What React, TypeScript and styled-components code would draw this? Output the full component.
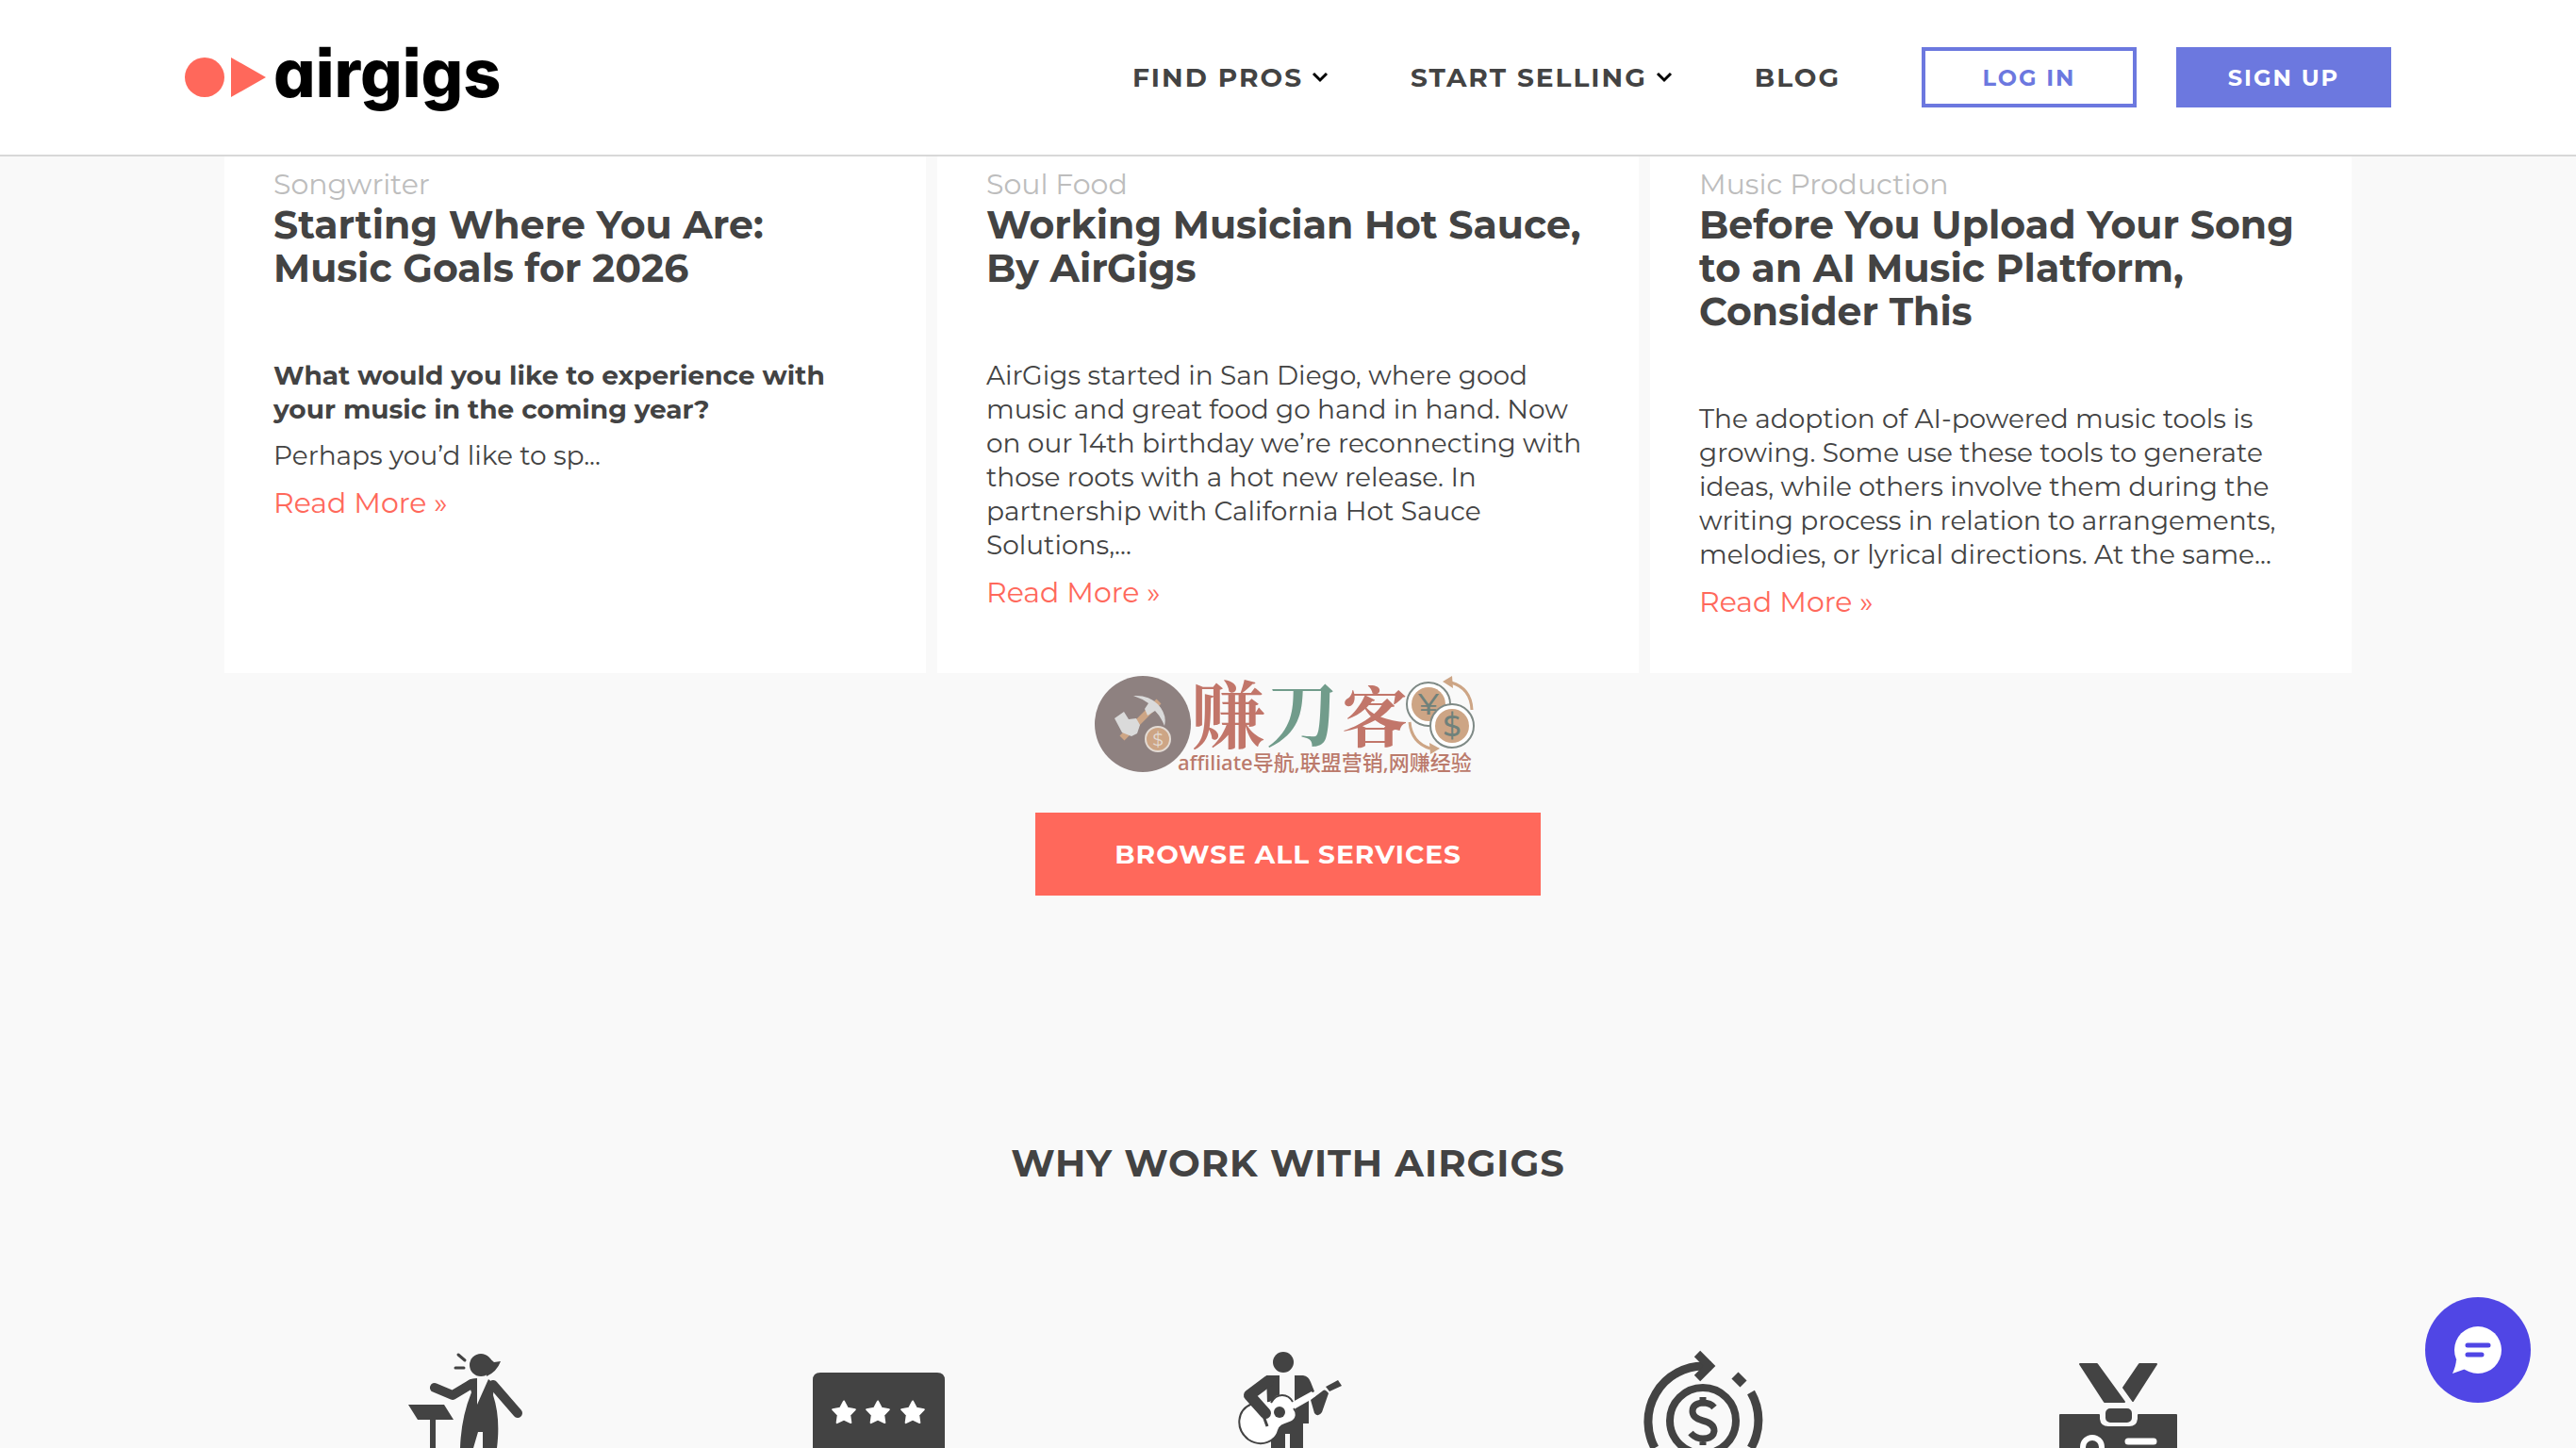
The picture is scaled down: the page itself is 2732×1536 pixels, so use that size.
import React from "react";
import styled, { createGlobalStyle } from "styled-components";

const ink = "#434343";
const coral = "#ff685b";
const indigo = "#6c78df";
const paper = "#f9f9f9";

const GlobalStyle = createGlobalStyle`
  * { box-sizing: border-box; }
  body {
    margin: 0;
    background: ${paper};
    color: ${ink};
    font-family: Montserrat, Inter, "Noto Sans CJK SC", sans-serif;
  }
  h2, h3, p { margin: 0; }
  a { color: inherit; text-decoration: none; }
  button { font: inherit; cursor: pointer; }
`;

const Header = styled.header`
  display: flex;
  align-items: center;
  justify-content: space-between;
  height: 166px;
  padding: 0 196px;
  background: #fff;
  border-bottom: 2px solid #d8d8d8;
`;

const Logo = styled.a`
  display: flex;
  align-items: center;
  gap: 8px;
`;

const LogoMark = styled.svg`
  width: 86px;
  height: 44px;
`;

const LogoName = styled.span`
  color: #000;
  font-family: Inter, "Open Sans", sans-serif;
  font-size: 70px;
  font-weight: 800;
  line-height: 80px;
  padding-bottom: 8px;
  font-feature-settings: "cv11", "ss07";
`;

const Nav = styled.nav`
  display: flex;
  align-items: center;
`;

const NavItem = styled.a`
  display: flex;
  align-items: center;
  gap: 9px;
  margin-right: 86px;
  font-size: 28px;
  font-weight: 700;
  line-height: 36px;
  letter-spacing: 2px;

  svg {
    width: 18px;
    height: 14px;
    margin-right: 1px;
  }
`;

const Actions = styled.div`
  display: flex;
  gap: 42px;
`;

const HeaderButton = styled.button<{ $filled?: boolean }>`
  width: 228px;
  height: 64px;
  padding: 0;
  border: 4px solid ${indigo};
  background: ${(p) => (p.$filled ? indigo : "#fff")};
  color: ${(p) => (p.$filled ? "#fff" : indigo)};
  font-size: 24px;
  font-weight: 700;
  letter-spacing: 2px;
`;

const Cards = styled.section`
  display: grid;
  grid-template-columns: repeat(3, 1fr);
  gap: 12px;
  padding: 0 238px;
`;

const Card = styled.article`
  min-height: 548px;
  padding: 11px 48px 36px 52px;
  background: #fff;
`;

const Category = styled.p`
  color: #bdbdbd;
  font-size: 30px;
  font-weight: 400;
  line-height: 38px;
`;

const CardTitle = styled.h3`
  margin-bottom: 73px;
  font-size: 41px;
  font-weight: 700;
  line-height: 46px;
  white-space: pre-line;
`;

const Text = styled.p<{ $strong?: boolean }>`
  margin-bottom: 13px;
  font-size: 28px;
  font-weight: ${(p) => (p.$strong ? 700 : 400)};
  line-height: 36px;
  white-space: pre-line;
`;

const ReadMore = styled.a`
  display: block;
  color: ${coral};
  font-size: 30px;
  line-height: 40px;
`;

const Centered = styled.section`
  display: flex;
  flex-direction: column;
  align-items: center;
`;

const Badge = styled.svg`
  width: 412px;
  height: 110px;
  margin-bottom: 38px;
  overflow: visible;
`;

const BrowseButton = styled.button`
  width: 536px;
  height: 88px;
  border: 0;
  background: ${coral};
  color: #fff;
  font-size: 28px;
  font-weight: 700;
  letter-spacing: 1px;
`;

const SectionTitle = styled.h2`
  margin: 259px 0 165px;
  font-size: 40px;
  font-weight: 700;
  line-height: 50px;
  letter-spacing: 1px;
`;

const Reasons = styled.ul`
  display: grid;
  grid-template-columns: repeat(5, 1fr);
  margin: 0;
  padding: 0 270px;
  list-style: none;
`;

const Reason = styled.li`
  display: flex;
  justify-content: center;
`;

const ReasonIcon = styled.svg`
  width: 160px;
  height: 112px;
`;

const ChatButton = styled.button`
  position: fixed;
  right: 48px;
  bottom: 48px;
  width: 112px;
  height: 112px;
  padding: 0;
  border: 0;
  border-radius: 50%;
  background: #5046e5;

  svg {
    display: block;
    width: 112px;
    height: 112px;
  }
`;

const Chevron = () => (
  <svg viewBox="0 0 18 14" aria-hidden="true">
    <path d="M2 3l7 7 7-7" fill="none" stroke="#000" strokeWidth="3" />
  </svg>
);

const posts = [
  {
    category: "Songwriter",
    title: "Starting Where You Are:\nMusic Goals for 2026",
    lead: "What would you like to experience with\nyour music in the coming year?",
    text: "Perhaps you’d like to sp...",
  },
  {
    category: "Soul Food",
    title: "Working Musician Hot Sauce,\nBy AirGigs",
    text: "AirGigs started in San Diego, where good\nmusic and great food go hand in hand. Now\non our 14th birthday we’re reconnecting with\nthose roots with a hot new release. In\npartnership with California Hot Sauce\nSolutions,...",
  },
  {
    category: "Music Production",
    title: "Before You Upload Your Song\nto an AI Music Platform,\nConsider This",
    text: "The adoption of AI-powered music tools is\ngrowing. Some use these tools to generate\nideas, while others involve them during the\nwriting process in relation to arrangements,\nmelodies, or lyrical directions. At the same...",
  },
];

const AffiliateBadge = () => (
  <Badge viewBox="0 0 412 110" role="img" aria-label="赚刀客">
    <circle cx="52" cy="54" r="51" fill="#8e8180" />
    <path d="M30 69L69 30" stroke="#cda585" strokeWidth="7" />
    <path d="M42 24Q58 23 68 33Q78 44 75 56Q71 46 65 40L57 45L54 38L58 32Q51 27 42 24Z" fill="#dadada" />
    <path d="M22 48L32 41L37 49L45 48L49 55L46 64L40 67L30 63Z" fill="#dadada" />
    <circle cx="68" cy="70" r="13" fill="#cda585" stroke="#e3dbd4" strokeWidth="2" />
    <text x="68" y="77" textAnchor="middle" fontSize="19" fill="#e3dbd4">$</text>
    <g fontFamily='"Noto Serif CJK SC", "Noto Sans CJK SC", sans-serif' fontWeight="700">
      <text x="104" y="74" fontSize="78" fill="#c2766a">赚</text>
      <text x="183" y="72" fontSize="76" fill="#719c8b">刀</text>
      <text x="263" y="73" fontSize="70" fill="#c2766a">客</text>
    </g>
    <text x="89" y="103" fontFamily='"Noto Sans", "Noto Sans CJK SC", sans-serif' fontSize="22" fontWeight="500" fill="#bb7a6b">
      affiliate导航,联盟营销,网赚经验
    </text>
    <g stroke="#7f8a86" strokeWidth="2" fill="#fff">
      <circle cx="355" cy="33" r="23" />
      <circle cx="355" cy="33" r="18" fill="#cda585" stroke="none" />
    </g>
    <text x="355" y="44" textAnchor="middle" fontSize="31" fontWeight="500" fill="#6f817b">¥</text>
    <g stroke="#7f8a86" strokeWidth="2" fill="#fff">
      <circle cx="380" cy="56" r="23" />
      <circle cx="380" cy="56" r="18" fill="#cda585" stroke="none" />
    </g>
    <text x="380" y="67" textAnchor="middle" fontSize="31" fontWeight="500" fill="#6f817b">$</text>
    <g fill="none" stroke="#cda585" strokeWidth="3">
      <path d="M401 39Q400 16 379 10" />
      <path d="M335 52Q337 74 357 80" />
    </g>
    <path d="M370 9L380 3L381 16ZM367 80L356 74L357 86Z" fill="#cda585" />
  </Badge>
);

const Conductor = () => (
  <ReasonIcon viewBox="0 0 160 112" role="img" aria-label="Performer at a stand">
    <g fill={ink}>
      <path d="M24 66H62L72 82H34ZM47 82H53V112H47Z" />
      <circle cx="101" cy="24" r="12" />
      <path d="M107 14L115 21L122 20Q118 31 107 36Z" />
      <path d="M87 41Q90 38 97 38V66L109 39L115 44L114 56Q122 80 118 112H103V95H98L93 112H79Q80 80 91 53Z" />
    </g>
    <g fill="none" stroke={ink} strokeLinecap="round" strokeLinejoin="round">
      <path d="M52 48L71 56L91 44M114 45L140 75" strokeWidth="10" />
      <path d="M77 13L84 19M74 27H83" strokeWidth="3" />
    </g>
  </ReasonIcon>
);

const star = (cx: number) =>
  Array.from({ length: 10 }, (_, i) => {
    const r = i % 2 ? 6.5 : 12.5;
    const a = -Math.PI / 2 + (i * Math.PI) / 5;
    return `${cx + r * Math.cos(a)},${75 + r * Math.sin(a)}`;
  }).join(" ");

const Rating = () => (
  <ReasonIcon viewBox="0 0 160 112" role="img" aria-label="Three star review">
    <path d="M14 112V40Q14 32 22 32H146Q154 32 154 40V112Z" fill={ink} />
    {[47, 83, 120].map((cx) => (
      <polygon key={cx} points={star(cx)} fill="#fff" stroke="#fff" strokeWidth="2" strokeLinejoin="round" />
    ))}
  </ReasonIcon>
);

const Guitarist = () => (
  <ReasonIcon viewBox="0 0 160 112" role="img" aria-label="Guitar player">
    <g fill={ink}>
      <circle cx="75" cy="21" r="11" />
      <path d="M57 35H71V58L58 64Z" />
      <path d="M87 35H96Q102 36 104 42L108 52L87 64Z" />
      <path d="M88 70L102 62V86H96V112H82V97H77V112H62V90Z" />
      <path d="M104 61L116 52Q119 48 123 54L116 74Q112 80 108 75Z" />
      <path d="M120 47L133 40L137 46L124 52Z" />
    </g>
    <path
      d="M44 64C25 72 24 92 38 103C52 112 67 105 70 93C72 87 77 87 82 85C90 82 90 75 87 70L109 57L105 52L85 63C80 54 68 53 64 61C60 66 52 61 44 64Z"
      fill="#fff"
    />
    <path
      d="M42 65C25 72 24 92 38 103C52 112 67 105 70 93C72 87 77 87 82 85C90 82 90 75 86 70M85 63C80 54 68 53 62 64"
      fill="none"
      stroke={ink}
      strokeWidth="2"
    />
    <circle cx="71" cy="74" r="6" fill={ink} />
    <path d="M59 41L39 56L56 75" fill="none" stroke={ink} strokeWidth="12" strokeLinejoin="round" strokeLinecap="round" />
    <path d="M54 78L58 89" stroke={ink} strokeWidth="3" />
  </ReasonIcon>
);

const MoneyBack = () => (
  <ReasonIcon viewBox="0 0 160 112" role="img" aria-label="Money back">
    <g fill="none" stroke={ink} strokeWidth="8">
      <circle cx="82" cy="83" r="35" />
      <path d="M31 112A59 59 0 0 1 82 25H91M133 53A59 59 0 0 1 133 112" strokeWidth="9" />
      <path d="M76 12L89 25L76 38" strokeWidth="9" />
      <path d="M116 35L125 44" strokeWidth="10" />
    </g>
    <path
      d="M94 69Q90 64 82 64Q71 65 71 73Q71 80 82 83Q94 86 94 94Q93 102 82 102Q74 102 69 96M82 58V66M82 101V109"
      fill="none"
      stroke={ink}
      strokeWidth="7"
    />
  </ReasonIcon>
);

const Pass = () => (
  <ReasonIcon viewBox="0 0 160 112" role="img" aria-label="Backstage pass">
    <g fill={ink} stroke={ink} strokeWidth="2" strokeLinejoin="round">
      <path d="M43 23H61L90 63H69Z" />
      <path d="M106 23H124L99 62L89 48Z" />
      <rect x="71" y="71" width="26" height="13" rx="4" />
      <path d="M22 112V77H63V81Q64 90 73 90H95Q104 90 105 81V77H145V112Z" />
    </g>
    <circle cx="56" cy="111" r="10" fill="none" stroke="#fff" strokeWidth="6" />
    <path d="M94 105H121" stroke="#fff" strokeWidth="7" strokeLinecap="round" />
  </ReasonIcon>
);

export default function App() {
  return (
    <>
      <GlobalStyle />
      <Header>
        <Logo href="#" aria-label="airgigs">
          <LogoMark viewBox="0 0 86 44" aria-hidden="true">
            <circle cx="21" cy="22" r="21" fill={coral} />
            <path d="M49 1L86 22L49 43Z" fill={coral} />
          </LogoMark>
          <LogoName>airgigs</LogoName>
        </Logo>
        <Nav>
          <NavItem href="#">FIND PROS <Chevron /></NavItem>
          <NavItem href="#">START SELLING <Chevron /></NavItem>
          <NavItem href="#">BLOG</NavItem>
          <Actions>
            <HeaderButton>LOG IN</HeaderButton>
            <HeaderButton $filled>SIGN UP</HeaderButton>
          </Actions>
        </Nav>
      </Header>
      <main>
        <Cards>
          {posts.map((post) => (
            <Card key={post.category}>
              <Category>{post.category}</Category>
              <CardTitle>{post.title}</CardTitle>
              {post.lead && <Text $strong>{post.lead}</Text>}
              <Text>{post.text}</Text>
              <ReadMore href="#">Read More »</ReadMore>
            </Card>
          ))}
        </Cards>
        <Centered>
          <AffiliateBadge />
          <BrowseButton>BROWSE ALL SERVICES</BrowseButton>
          <SectionTitle>WHY WORK WITH AIRGIGS</SectionTitle>
        </Centered>
        <Reasons>
          <Reason><Conductor /></Reason>
          <Reason><Rating /></Reason>
          <Reason><Guitarist /></Reason>
          <Reason><MoneyBack /></Reason>
          <Reason><Pass /></Reason>
        </Reasons>
      </main>
      <ChatButton aria-label="Open chat">
        <svg viewBox="0 0 112 112" aria-hidden="true">
          <circle cx="56" cy="56" r="25" fill="#fff" />
          <path d="M33 66Q33 72 29 81L43 76Z" fill="#fff" />
          <path d="M45 51H67M45 61H60" stroke="#5046e5" strokeWidth="5" strokeLinecap="round" />
        </svg>
      </ChatButton>
    </>
  );
}
